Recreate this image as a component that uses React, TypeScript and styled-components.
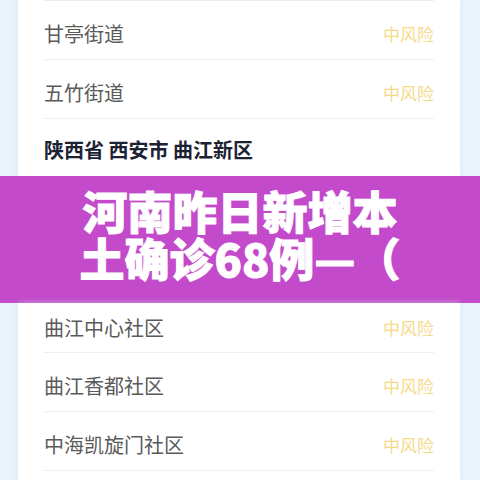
import * as React from 'react';
import styled, { createGlobalStyle } from 'styled-components';

interface Area {
    name: string;
    level: string;
}

const upperAreas: Area[] = [
    { name: '甘亭街道', level: '中风险' },
    { name: '五竹街道', level: '中风险' },
];

const lowerAreas: Area[] = [
    { name: '曲江中心社区', level: '中风险' },
    { name: '曲江香都社区', level: '中风险' },
    { name: '中海凯旋门社区', level: '中风险' },
];

export default function App() {
    return <>
        <GlobalStyle />
        <Page>
            <Card>
                <List $top>
                    {upperAreas.map(area => (
                        <Row key={area.name}>
                            <AreaName>{area.name}</AreaName>
                            <Level>{area.level}</Level>
                        </Row>
                    ))}
                    <RegionTitle>陕西省 西安市 曲江新区</RegionTitle>
                </List>
            </Card>
            <Banner>
                <BannerTitle>河南昨日新增本<br />土确诊68例—（</BannerTitle>
            </Banner>
            <Card $fill>
                <List>
                    {lowerAreas.map((area, i) => (
                        <Row key={area.name} $cut={i === 0}>
                            <AreaName>{area.name}</AreaName>
                            <Level>{area.level}</Level>
                        </Row>
                    ))}
                </List>
            </Card>
        </Page>
    </>
}

const GlobalStyle = createGlobalStyle`
body {
margin: 0;
background: #e9f3fb;
font-family: "Noto Sans CJK SC", "Noto Sans", sans-serif;
}
`

const Page = styled.div`
width: 480px;
height: 480px;
overflow: hidden;
display: flex;
flex-direction: column;
background: #e9f3fb;
`

const Card = styled.div<{ $fill?: boolean }>`
margin: 0 20px 0 18px;
background: #fff;
box-shadow: 0 0 6px rgba(210, 225, 240, 0.6);
flex: ${p => p.$fill ? '1 0 auto' : 'none'};
`

const List = styled.div<{ $top?: boolean }>`
margin: 0 26px;
border-top: ${p => p.$top ? '1px solid #eeeeee' : 'none'};
`

const Row = styled.div<{ $cut?: boolean }>`
display: flex;
align-items: center;
justify-content: space-between;
height: ${p => p.$cut ? '50px' : '59px'};
padding-top: ${p => p.$cut ? '0' : '6px'};
box-sizing: border-box;
border-bottom: 1px solid #efefef;
`

const AreaName = styled.div`
font-size: 20px;
color: #5a5a5a;
`

const Level = styled.div`
font-size: 17px;
color: #f4da8a;
`

const RegionTitle = styled.div`
height: 57px;
padding-top: 4px;
box-sizing: border-box;
display: flex;
align-items: center;
font-size: 20px;
font-weight: 700;
color: #1b2333;
`

const Banner = styled.div`
flex: none;
height: 127px;
display: flex;
align-items: center;
justify-content: center;
padding-bottom: 12px;
box-sizing: border-box;
background: #c34aca;
`

const BannerTitle = styled.div`
font-size: 45px;
line-height: 47px;
font-weight: 900;
color: #fff;
-webkit-text-stroke: 1px #fff;
text-align: center;
white-space: nowrap;
`
